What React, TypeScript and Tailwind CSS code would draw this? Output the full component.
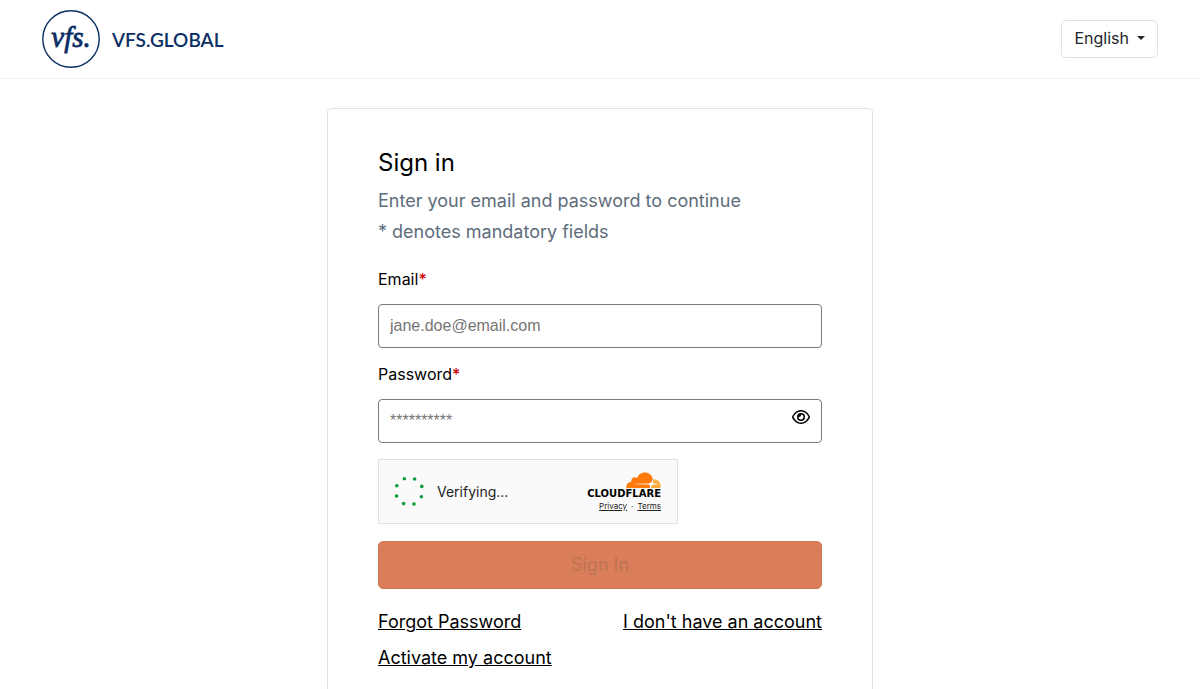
import { useState } from "react";
import { FaRegEye } from "react-icons/fa6";

function VfsLogo() {
  return (
    <a href="#" aria-label="VFS.GLOBAL" className="flex items-center gap-3 text-[#0b2f64]">
      <svg viewBox="0 0 58 58" className="size-[58px]" aria-hidden="true">
        <circle cx="29" cy="29" r="28.2" fill="none" stroke="currentColor" strokeWidth="1.4" />
        <text
          x="29"
          y="37"
          textAnchor="middle"
          fontFamily="'Liberation Serif', serif"
          fontStyle="italic"
          fontSize="29"
          fill="currentColor"
          stroke="currentColor"
          strokeWidth="0.8"
        >
          vfs.
        </text>
      </svg>
      <span className="pt-0.5 font-['Lato',sans-serif] text-[19px] leading-6 font-semibold">VFS.GLOBAL</span>
    </a>
  );
}

const dots = [
  [9.4, 1.8],
  [19.6, 2],
  [26.8, 9.4],
  [26.4, 19.8],
  [19, 27],
  [8.6, 26.6],
  [1.6, 19],
  [1.8, 8.8],
];

function Spinner() {
  return (
    <svg viewBox="0 0 30 30" className="size-[30px]" aria-hidden="true">
      {dots.map(([x, y]) => (
        <circle key={x} cx={x} cy={y} r="1.8" fill="#0c9a3b" />
      ))}
    </svg>
  );
}

function CloudflareMark() {
  return (
    <svg viewBox="0 6.3 24 11.2" className="h-4 w-[35px]" aria-hidden="true">
      <path
        fill="#ff7a0a"
        d="M16.5088 16.8447c.1475-.5068.0908-.9707-.1553-1.3154-.2246-.3164-.6045-.499-1.0615-.5205l-8.6592-.1123a.1559.1559 0 0 1-.1333-.0713c-.0283-.042-.0351-.0986-.021-.1553.0278-.084.1123-.1484.2036-.1562l8.7359-.1123c1.0351-.0489 2.1601-.8868 2.5537-1.9136l.499-1.3013c.0215-.0561.0293-.1128.0147-.168-.5625-2.5463-2.835-4.4453-5.5499-4.4453-2.5039 0-4.6284 1.6177-5.3876 3.8614-.4927-.3658-1.1187-.5625-1.794-.499-1.2026.119-2.1665 1.083-2.2861 2.2856-.0283.31-.0069.6128.0635.894C1.5683 13.171 0 14.7754 0 16.752c0 .1748.0142.3515.0352.5273.0141.083.0844.1475.1689.1475h15.9814c.0909 0 .1758-.0645.2032-.1553l.12-.4268z"
      />
      <path
        fill="#fbad41"
        d="M19.2656 11.2813c-.0771 0-.1611 0-.2383.0112-.0566 0-.1054.0415-.127.0976l-.3378 1.1744c-.1475.5068-.0918.9707.1543 1.3164.2256.3164.6055.498 1.0625.5195l1.8437.1133c.0557 0 .1055.0263.1329.0703.0283.043.0351.1074.0214.1562-.0283.084-.1132.1485-.204.1553l-1.921.1123c-1.041.0488-2.1582.8867-2.5527 1.914l-.1406.3585c-.0283.0713.0215.1416.0986.1416h6.5977c.0771 0 .1474-.0489.169-.126.1122-.4082.1757-.837.1757-1.2803 0-2.6025-2.125-4.727-4.7344-4.727z"
      />
    </svg>
  );
}

function Turnstile() {
  return (
    <div className="flex h-[65px] w-[300px] items-center border border-[#e0e0e0] bg-[#fafafa] px-4 text-[#232323]">
      <Spinner />
      <span role="status" className="ml-3 text-sm">Verifying...</span>
      <div className="ml-auto flex flex-col items-end">
        <CloudflareMark />
        <span className="font-['DejaVu_Sans',sans-serif] text-[10px] leading-3 font-bold text-black">CLOUDFLARE</span>
        <div className="flex gap-1 text-[8px] leading-3">
          <a href="#" className="underline">Privacy</a>
          <span aria-hidden="true">·</span>
          <a href="#" className="underline">Terms</a>
        </div>
      </div>
    </div>
  );
}

const inputClass =
  "h-11 w-full rounded border border-[#7b7b7b] bg-white px-[11px] font-['Liberation_Sans',Arial,sans-serif] text-base text-black placeholder:text-[#757575]";

export default function App() {
  const [visible, setVisible] = useState(false);
  return (
    <div className="bg-white font-['Inter',sans-serif] text-black">
      <header className="flex items-center justify-between border-b border-[#f0f0f2] px-[42px] py-[10px]">
        <VfsLogo />
        <button
          type="button"
          aria-haspopup="menu"
          className="flex h-[38px] items-center gap-2 rounded-[5px] border border-[#dee2e6] px-3 pb-0.5 text-base text-[#212529]"
        >
          English
          <svg viewBox="0 0 8 4" className="h-1 w-2" aria-hidden="true">
            <path d="M0 0h8L4 4z" fill="currentColor" />
          </svg>
        </button>
      </header>

      <main className="px-4 pt-[29px]">
        <form
          className="mx-auto max-w-[546px] rounded border border-[#dfe3ee] px-[50px] pt-9 pb-12"
          onSubmit={(e) => e.preventDefault()}
        >
          <h1 className="text-2xl leading-9">Sign in</h1>
          <p className="mt-1 text-lg leading-[31px] text-[#5d6d7c]">
            Enter your email and password to continue
            <br />* denotes mandatory fields
          </p>

          <div className="mt-5 flex flex-col gap-[13px]">
            <label htmlFor="email" className="text-base">
              Email<span className="font-medium text-[#cc0000]">*</span>
            </label>
            <input id="email" type="email" placeholder="jane.doe@email.com" className={inputClass} />
          </div>

          <div className="mt-[14px] flex flex-col gap-[13px]">
            <label htmlFor="password" className="text-base">
              Password<span className="font-medium text-[#cc0000]">*</span>
            </label>
            <div className="relative">
              <input
                id="password"
                type={visible ? "text" : "password"}
                placeholder="**********"
                className={inputClass}
              />
              <button
                type="button"
                aria-label="Show password"
                onClick={() => setVisible(!visible)}
                className="absolute top-2 right-3"
              >
                <FaRegEye className="h-5 w-[18px]" />
              </button>
            </div>
          </div>

          <div className="mt-4">
            <Turnstile />
          </div>

          <button
            type="submit"
            disabled
            className="mt-[17px] h-12 w-full rounded-[5px] border border-[#d27a56] bg-[#da7e59] text-lg text-[#bd7355]"
          >
            Sign In
          </button>

          <nav className="mt-[15px] flex flex-wrap justify-between text-lg leading-9">
            <a href="#" className="underline">Forgot Password</a>
            <a href="#" className="underline">I don't have an account</a>
            <a href="#" className="underline">Activate my account</a>
          </nav>
        </form>
      </main>
    </div>
  );
}
